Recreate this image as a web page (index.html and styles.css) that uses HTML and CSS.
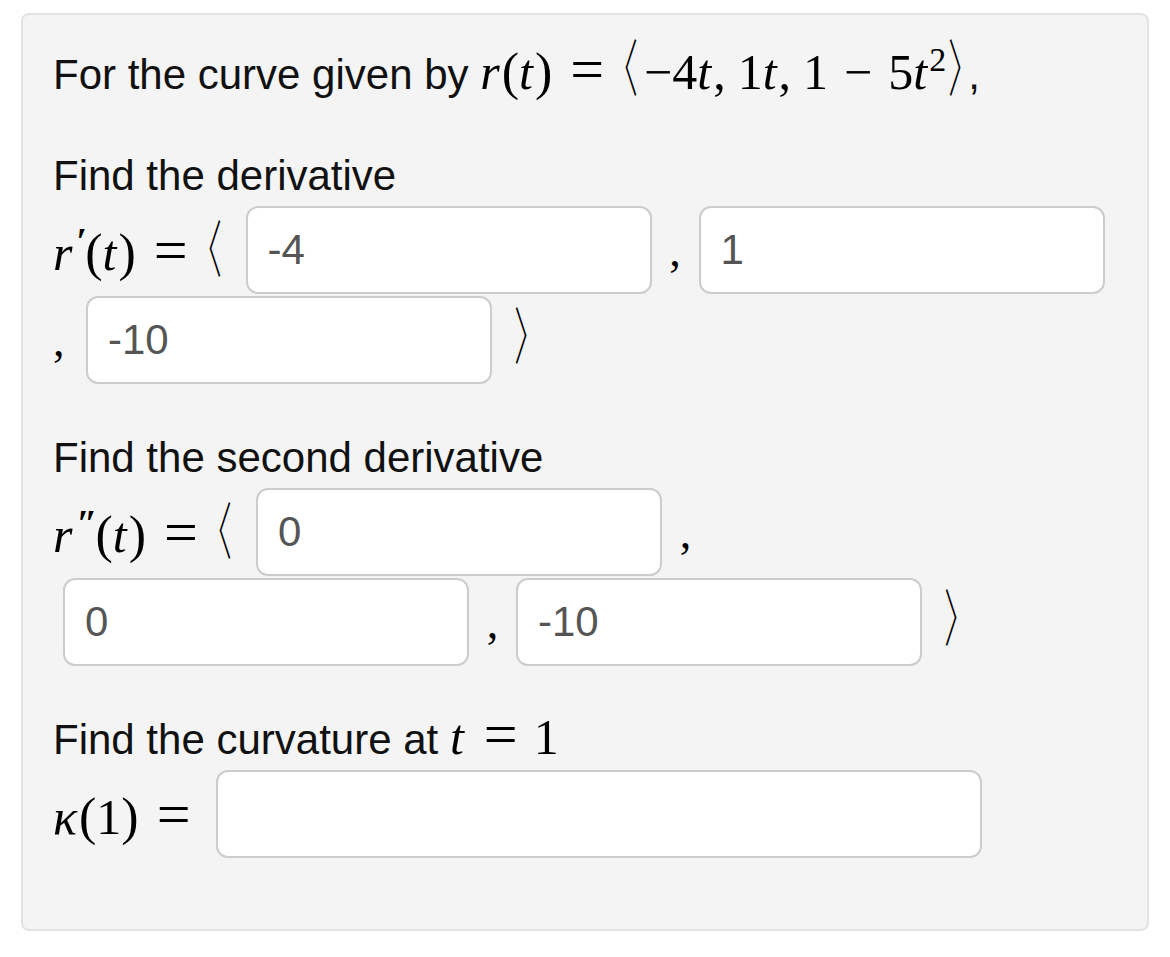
FILE: index.html
```html
<!DOCTYPE html>
<html>
<head>
<meta charset="utf-8">
<link rel="stylesheet" href="styles.css">
</head>
<body>
<div class="problem">
  <div class="line intro">For the curve given by <span class="m"><i>r</i><span class="p">(</span><i>t</i><span class="p">)</span><span class="rel">=</span><span class="ang"><span class="g">〈</span></span>−4<i>t</i>,<span class="thin"></span>1<i>t</i>,<span class="thin"></span>1<span class="bin">−</span>5<i>t</i><sup>2</sup><span class="ang cl"><span class="g">〉</span></span></span>,</div>

  <div class="line head">Find the derivative</div>
  <div class="row">
    <span class="m"><i>r</i><span class="prime">′</span><span class="p">(</span><i>t</i><span class="p">)</span><span class="rel">=</span><span class="ang"><span class="g">〈</span></span></span>
    <span class="field w1 first">-4</span>
    <span class="comma">,</span>
    <span class="field w1">1</span>
  </div>
  <div class="row">
    <span class="comma lead">,</span>
    <span class="field w1">-10</span>
    <span class="m close"><span class="ang cl"><span class="g">〉</span></span></span>
  </div>

  <div class="line head second">Find the second derivative</div>
  <div class="row">
    <span class="m"><i>r</i><span class="prime">″</span><span class="p">(</span><i>t</i><span class="p">)</span><span class="rel">=</span><span class="ang"><span class="g">〈</span></span></span>
    <span class="field w1 first">0</span>
    <span class="comma">,</span>
  </div>
  <div class="row indent">
    <span class="field w1">0</span>
    <span class="comma">,</span>
    <span class="field w1">-10</span>
    <span class="m close"><span class="ang cl"><span class="g">〉</span></span></span>
  </div>

  <div class="line head second">Find the curvature at <span class="m"><i>t</i><span class="rel">=</span>1</span></div>
  <div class="row">
    <span class="m"><i class="kappa">κ</i><span class="p">(</span>1<span class="p">)</span><span class="rel">=</span></span>
    <span class="field w2 kfield"></span>
  </div>
</div>
</body>
</html>
```

FILE: styles.css
```css
html, body {
  margin: 0;
  padding: 0;
  background: #ffffff;
}

body {
  font-family: "Liberation Sans", Arial, Helvetica, sans-serif;
  color: #111111;
}

.problem {
  box-sizing: border-box;
  margin: 13px 0 0 21px;
  width: 1128px;
  height: 918px;
  border: 2px solid #e3e3e3;
  border-radius: 8px;
  background: #f4f4f4;
  padding: 35px 30px 0 30px;
}

.line {
  font-size: 42px;
  line-height: 50px;
  height: 50px;
  white-space: nowrap;
}

.head {
  margin-top: 51px;
  margin-bottom: 5px;
}

.head.second {
  margin-top: 49px;
}

.row {
  display: flex;
  align-items: center;
  height: 88px;
  margin-bottom: 2px;
  white-space: nowrap;
}

.row.indent {
  padding-left: 10px;
}

.m {
  font-family: "Liberation Serif", "DejaVu Serif", serif;
  font-size: 50px;
  color: #000000;
  display: inline-flex;
  align-items: baseline;
}

.line .m {
  display: inline;
}

.line .m,
.line .m * {
  line-height: 0;
}

.m i {
  font-style: italic;
  margin-right: 2px;
}

.m .p {
  font-size: 52px;
}

.m .prime {
  font-size: 38px;
  font-weight: bold;
  position: relative;
  top: -16px;
  margin-left: 2px;
  margin-right: -2px;
}

.m .rel {
  font-size: 60px;
  margin: 0 16px 0 18px;
}

.m .bin {
  margin: 0 16px;
}

.m .thin {
  display: inline-block;
  width: 12px;
}

.m sup {
  font-size: 34px;
  line-height: 0;
}

.m .ang {
  display: inline-block;
  margin: 0 6px 0 2px;
}

.m .ang .g {
  display: inline-block;
  font-family: "Noto Sans CJK SC", "DejaVu Sans", sans-serif;
  font-feature-settings: "halt" 1;
  font-weight: 300;
  font-size: 56px;
  line-height: 0;
  transform: scale(0.55, 1.1);
  margin: 0 -6px;
}

.m .ang.cl {
  margin: 0 4px 0 2px;
}

.comma {
  font-family: "Liberation Serif", serif;
  font-size: 46px;
  color: #000;
  width: 47px;
  text-align: center;
}

.comma.lead {
  width: 33px;
  text-align: left;
}

.field {
  box-sizing: border-box;
  height: 88px;
  border: 2px solid #cccccc;
  border-radius: 12px;
  background: #ffffff;
  padding: 0 20px;
  font-family: "Liberation Sans", Arial, sans-serif;
  font-size: 42px;
  color: #555555;
  display: flex;
  align-items: center;
}

.w1 {
  width: 406px;
}

.w2 {
  width: 766px;
}

.first {
  margin-left: 18px;
}

.kfield {
  margin-left: 9px;
}

.close {
  margin-left: 20px;
}
```
